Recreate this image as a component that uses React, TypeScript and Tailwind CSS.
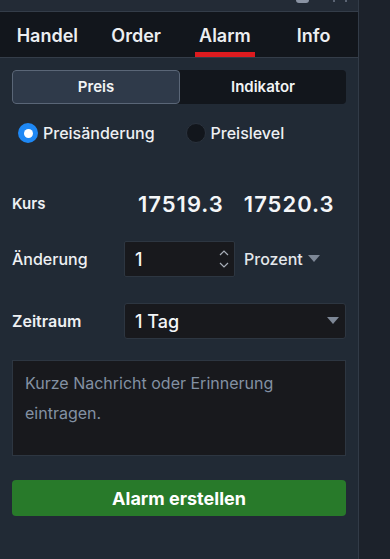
import React, { useState } from 'react';

const tabs = ['Handel', 'Order', 'Alarm', 'Info'];

const Triangle: React.FC<{ className?: string }> = ({ className }) => (
  <svg width="12" height="8" viewBox="0 0 12 8" className={className}>
    <path d="M0 0 L12 0 L6 7 Z" fill="#7d8796" />
  </svg>
);

const App: React.FC = () => {
  const [active] = useState('Alarm');

  return (
    <div className="flex w-[390px] h-[559px] bg-[#1c222b] font-['Inter',sans-serif] text-white overflow-hidden">
      {/* Main panel */}
      <div className="w-[359px] flex flex-col bg-[#212a35] border-r border-[#323b47]">
        {/* top strip */}
        <div className="h-[12px] bg-[#232b36] border-b border-[#343d49] relative">
          <div className="absolute left-[296px] top-0 w-[13px] h-[3px] bg-[#8a93a3] rounded-b-sm" />
          <div className="absolute left-[333px] top-0 w-[2px] h-[2px] bg-[#5b6473]" />
          <div className="absolute left-[345px] top-0 w-[2px] h-[2px] bg-[#5b6473]" />
        </div>

        {/* tabs */}
        <div className="h-[46px] bg-[#12161c] border-b border-[#343d49] flex pl-[3px]">
          {tabs.map((t) => (
            <div key={t} className="w-[90px] relative flex items-center justify-center">
              <span className="text-[18px] font-semibold text-[#eceef1] mt-[1px]">{t}</span>
              {t === active && (
                <div className="absolute bottom-0 left-1/2 -translate-x-1/2 w-[60px] h-[5px] bg-[#de1b1f]" />
              )}
            </div>
          ))}
        </div>

        <div className="flex flex-col px-[12px] pt-[12px]">
          {/* segmented */}
          <div className="flex h-[34px] rounded-[4px] bg-[#12161c]">
            <div className="flex-1 flex items-center justify-center bg-[#2f3a4a] border border-[#5a6677] rounded-[4px] text-[15px] font-semibold text-[#f1f3f5]">
              Preis
            </div>
            <div className="flex-1 flex items-center justify-center text-[15px] font-semibold text-[#f1f3f5]">
              Indikator
            </div>
          </div>

          {/* radios */}
          <div className="flex items-center mt-[18px] h-[22px]">
            <div className="flex items-center ml-[6px]">
              <div className="w-[20px] h-[20px] rounded-full bg-[#1e88f5] flex items-center justify-center">
                <div className="w-[9px] h-[9px] rounded-full bg-white" />
              </div>
              <span className="ml-[5px] text-[16px] font-medium text-[#eef0f3]">Preisänderung</span>
            </div>
            <div className="flex items-center ml-[31px]">
              <div className="w-[20px] h-[20px] rounded-full bg-[#12161c] border border-[#2a323d]" />
              <span className="ml-[5px] text-[16px] font-medium text-[#eef0f3]">Preislevel</span>
            </div>
          </div>

          {/* Kurs */}
          <div className="flex items-center mt-[48px] h-[24px]">
            <span className="w-[126px] text-[15px] font-semibold text-[#eef0f3]">Kurs</span>
            <span className="text-[22px] font-semibold text-[#f4f6f8] tracking-[1px]">17519.3</span>
            <span className="ml-[20px] text-[22px] font-semibold text-[#f4f6f8] tracking-[1px]">17520.3</span>
          </div>

          {/* Änderung */}
          <div className="flex items-center mt-[25px]">
            <span className="w-[112px] text-[16px] font-medium text-[#eef0f3]">Änderung</span>
            <div className="w-[111px] h-[36px] bg-[#18191d] border border-[#2d3641] rounded-[2px] flex items-center pl-[10px] pr-[5px]">
              <span className="flex-1 text-[18px] font-medium text-[#f4f6f8]">1</span>
              <div className="flex flex-col items-center gap-[6px]">
                <svg width="10" height="6" viewBox="0 0 10 6">
                  <path d="M1 5 L5 1 L9 5" stroke="#a7aeb8" strokeWidth="1.2" fill="none" />
                </svg>
                <svg width="10" height="6" viewBox="0 0 10 6">
                  <path d="M1 1 L5 5 L9 1" stroke="#a7aeb8" strokeWidth="1.2" fill="none" />
                </svg>
              </div>
            </div>
            <span className="ml-[9px] text-[16px] font-medium text-[#e4e7eb]">Prozent</span>
            <Triangle className="ml-[5px]" />
          </div>

          {/* Zeitraum */}
          <div className="flex items-center mt-[26px]">
            <span className="w-[112px] text-[16px] font-semibold text-[#eef0f3]">Zeitraum</span>
            <div className="flex-1 h-[36px] bg-[#18191d] border border-[#2d3641] rounded-[3px] flex items-center pl-[10px] pr-[6px]">
              <span className="flex-1 text-[18px] font-medium text-[#f4f6f8]">1 Tag</span>
              <Triangle />
            </div>
          </div>

          {/* Textarea */}
          <div className="mt-[21px] h-[96px] bg-[#18191d] border border-[#2d3641] px-[12px] pt-[7px] text-[16px] leading-[30px] text-[#8391a3]">
            Kurze Nachricht oder Erinnerung eintragen.
          </div>

          {/* button */}
          <button className="mt-[24px] h-[36px] rounded-[4px] bg-[#287a2a] text-[18px] font-bold text-white">
            Alarm erstellen
          </button>
        </div>
      </div>
      <div className="flex-1" />
    </div>
  );
};

export default App;
